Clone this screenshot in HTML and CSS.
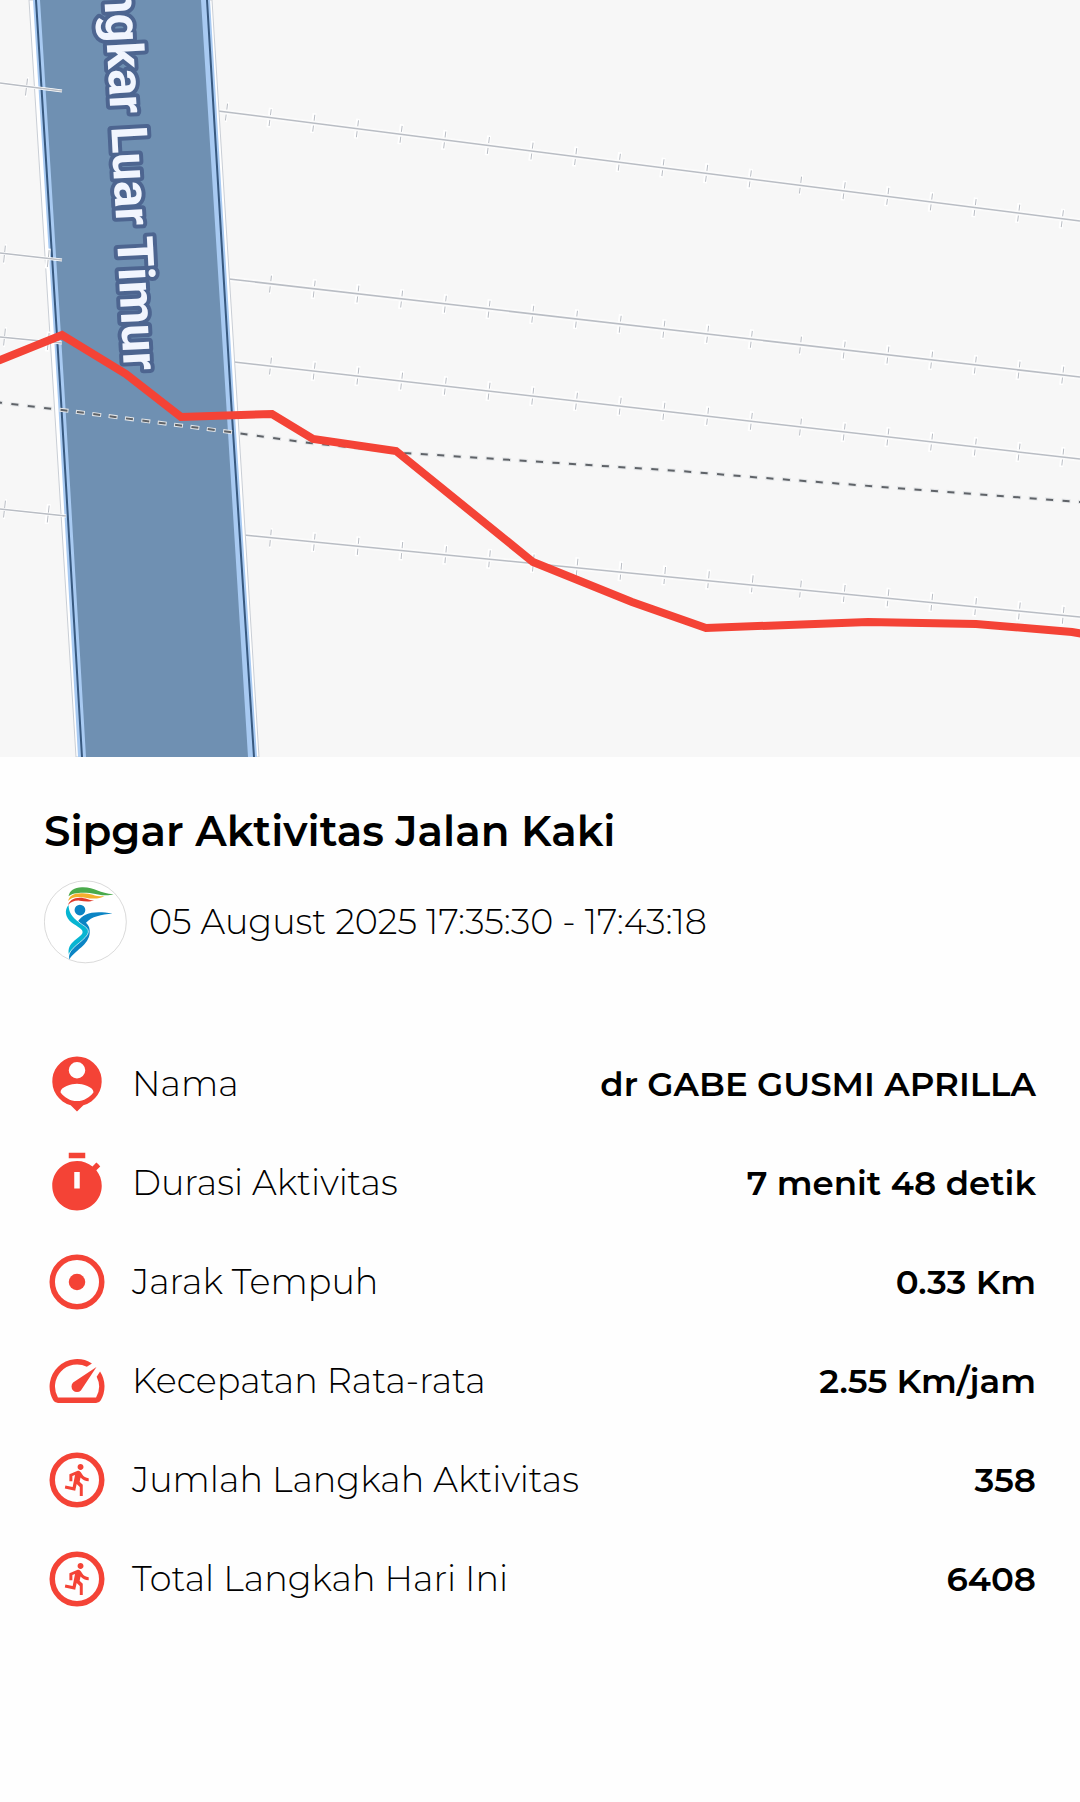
FILE: index.html
```html
<!DOCTYPE html>
<html lang="id">
<head>
    <meta charset="UTF-8">
    <meta name="viewport" content="width=device-width, initial-scale=1.0">
    <title>Sipgar Aktivitas Jalan Kaki</title>
    <link rel="stylesheet" href="styles.css">
</head>
<body>

<svg class="map" viewBox="0 0 1080 757" role="img" aria-label="Peta rute">
    <defs>
        <path id="rails" d="M218 111L1080 221M229 279L1080 377M234 362L680 413L1080 459M244 535L680 578L1080 617"/>
        <path id="ties" d="M226 112L775 182M800 185L1080 221M270 284L775 342M800 345L1080 377M270 366L775 424M800 427L1080 459M270 538L775 586M800 589L1080 617"/>
        <path id="rails-left" d="M0 83L62 91M0 253L62 260M0 337L62 343M0 509L66 516"/>
        <path id="ties-left" d="M26 87L60 91M4 254L62 260M4 337L62 343M4 509L66 516"/>
        <path id="footpath" d="M-5 402L11 404L62 410L230 432L310 443L405 453L680 471L752 477L1080 502"/>
    </defs>

    <!-- Railway east of the road -->
    <use href="#ties" class="tie-halo"/>
    <use href="#ties" class="tie"/>
    <use href="#rails" class="rail-halo"/>
    <use href="#rails" class="rail"/>

    <!-- Road -->
    <path class="road-outline" d="M29 0L54 400L76 757H259L237 400L212 0Z"/>
    <path class="road-edge" d="M33 0L58 400L78 757H257L234 400L210 0Z"/>
    <path class="road" d="M40 0L65 400L86 757H248L226 400L201 0Z"/>
    <path class="road-line" d="M36 0L61 400L82 757M207 0L231 400L254 757"/>

    <!-- Railway west of the road -->
    <use href="#ties-left" class="tie-halo"/>
    <use href="#ties-left" class="tie"/>
    <use href="#rails-left" class="rail-halo-thin"/>
    <use href="#rails-left" class="rail"/>

    <use href="#footpath" class="footpath-halo"/>
    <use href="#footpath" class="footpath"/>

    <text class="road-name" transform="translate(124 371) rotate(87)">ngkar Luar Timur</text>

    <path class="route" d="M-10 364L0 360L62 335L126 374L181 417L272 414L313 439L396 451L533 562L632 602L706 628L868 622L976 624L1072 632L1090 635"/>
</svg>

<main class="details">
    <h1>Sipgar Aktivitas Jalan Kaki</h1>
    <div class="meta">
        <svg class="logo" viewBox="24 29 247 249" aria-hidden="true">
            <circle cx="147" cy="153" r="122" fill="#fff" stroke="#c8c8c8" stroke-width="2"/>
            <path fill="#4aaa4c" d="M97 77C100 60 115 49 140 50C175 50 190 68 231 71C205 79 185 70 160 67C130 65 108 67 97 77Z"/>
            <path fill="#f4af2d" d="M96 91C98 78 110 68 135 68C165 67 175 79 204 77C185 87 165 84 148 81C120 77 105 80 96 91Z"/>
            <path fill="#e0392b" d="M96 103C98 90 112 81 130 81C150 81 158 90 173 89C158 95 145 92 130 90C115 89 103 94 96 103Z"/>
            <path fill="#0b84c4" d="M126 150C142 129 170 118 228 129C195 131 165 137 149 156C158 164 161 174 160 186C157 222 118 236 99 265C96 240 112 226 130 212C146 198 146 176 126 150Z"/>
            <path fill="#07b5d2" d="M97 103C84 118 87 140 106 155C122 167 144 175 138 188C124 207 92 215 98 250C108 224 152 205 156 184C157 171 144 166 128 154C106 138 98 125 97 103Z"/>
            <path fill="none" stroke="#fff" stroke-width="2" d="M98 250C108 224 152 205 156 184C157 171 144 166 128 154"/>
            <circle cx="131" cy="118" r="16" fill="#0b84c4"/>
        </svg>
        <p>05 August 2025 17:35:30 - 17:43:18</p>
    </div>

    <dl class="stats">
        <div class="row">
            <dt>
                <svg class="icon" viewBox="0 0 24 24" aria-hidden="true"><path fill-rule="evenodd" d="M12 2a9 9 0 0 0-2.3 17.7L12 22l2.3-2.3A9 9 0 0 0 12 2zm0 2a3 3 0 1 1 0 6 3 3 0 0 1 0-6zM6 15c0-2 4-3.100 6-3.100s6 1.100 6 3.100c-1.300 1.900-3.500 3.200-6 3.200S7.300 16.900 6 15z"/></svg>
                Nama
            </dt>
            <dd>dr GABE GUSMI APRILLA</dd>
        </div>
        <div class="row">
            <dt>
                <svg class="icon" viewBox="0 0 24 24" aria-hidden="true"><path fill-rule="evenodd" d="M15 1H9v2h6V1zm-4 13h2V8h-2v6zm8.030-6.610l1.420-1.420c-.43-.51-.9-.99-1.410-1.410l-1.420 1.420C16.070 4.740 14.120 4 12 4c-4.970 0-9 4.030-9 9s4.020 9 9 9 9-4.030 9-9c0-2.120-.74-4.070-1.970-5.610z"/></svg>
                Durasi Aktivitas
            </dt>
            <dd>7 menit 48 detik</dd>
        </div>
        <div class="row">
            <dt>
                <svg class="icon" viewBox="0 0 24 24" aria-hidden="true"><circle class="ring" cx="12" cy="12" r="9"/><circle cx="12" cy="12" r="3"/></svg>
                Jarak Tempuh
            </dt>
            <dd>0.33 Km</dd>
        </div>
        <div class="row">
            <dt>
                <svg class="icon" viewBox="0 0 24 24" aria-hidden="true"><path d="M20.380 8.570l-1.230 1.850a8 8 0 0 1-.22 7.580H5.070A8 8 0 0 1 15.580 6.850l1.850-1.230A10 10 0 0 0 3.350 19a2 2 0 0 0 1.720 1h13.850a2 2 0 0 0 1.740-1 10 10 0 0 0-.27-10.440zm-9.790 6.840a2 2 0 0 0 2.830 0l5.660-8.490-8.490 5.660a2 2 0 0 0 0 2.830z"/></svg>
                Kecepatan Rata-rata
            </dt>
            <dd>2.55 Km/jam</dd>
        </div>
        <div class="row">
            <dt>
                <svg class="icon" viewBox="0 0 24 24" aria-hidden="true"><circle class="ring" cx="12" cy="12" r="9"/><path id="runner" transform="translate(6 5.4) scale(.54)" d="M13.490 5.480c1.100 0 2-.9 2-2s-.9-2-2-2-2 .9-2 2 .9 2 2 2zm-3.600 13.900l1-4.400 2.100 2v6h2v-7.500l-2.100-2 .6-3c1.300 1.500 3.300 2.500 5.500 2.500v-2c-1.900 0-3.500-1-4.300-2.400l-1-1.600c-.4-.6-1-1-1.700-1-.3 0-.5.1-.8.1l-5.200 2.200v4.700h2v-3.400l1.800-.7-1.600 8.100-4.900-1-.4 2 7 1.400z"/></svg>
                Jumlah Langkah Aktivitas
            </dt>
            <dd>358</dd>
        </div>
        <div class="row">
            <dt>
                <svg class="icon" viewBox="0 0 24 24" aria-hidden="true"><circle class="ring" cx="12" cy="12" r="9"/><use href="#runner"/></svg>
                Total Langkah Hari Ini
            </dt>
            <dd>6408</dd>
        </div>
    </dl>
</main>

</body>
</html>
```
FILE: styles.css
```css
body {
    margin: 0;
    background-color: #fefefe;
    color: black;
    font-family: Montserrat, Inter, sans-serif;
    font-size: 35px;
    line-height: 44px;
}

/* Map */
.map {
    display: block;
    width: 100%;
    background-color: #f7f7f7;
}
.map path, .map use {
    fill: none;
}
.tie-halo {
    stroke: white;
    stroke-width: 20;
    stroke-dasharray: 4 40;
    stroke-dashoffset: 2;
}
.tie {
    stroke: #b9bdc4;
    stroke-width: 17;
    stroke-dasharray: 1 43;
}
.rail-halo {
    stroke: #fbfbfb;
    stroke-width: 5;
}
.rail-halo-thin {
    stroke: white;
    stroke-width: 3;
}
.rail {
    stroke: #b9bdc4;
    stroke-width: 1.5;
}
.map .road-outline {
    fill: white;
    stroke: #c9ced5;
    stroke-width: 1;
}
.map .road-edge {
    fill: #a8caf2;
}
.map .road {
    fill: #6f90b2;
}
.road-line {
    stroke: #38597f;
    stroke-width: 2;
}
.footpath-halo {
    stroke: #e4e6e8;
    stroke-width: 4;
    stroke-dasharray: 9 7.5;
    stroke-dashoffset: 1;
}
.footpath {
    stroke: #5f6368;
    stroke-width: 2;
    stroke-dasharray: 7 9.5;
}
.road-name {
    font-family: Roboto, sans-serif;
    font-size: 50px;
    font-weight: 700;
    text-anchor: end;
    fill: #f1f5fe;
    stroke: #4d6590;
    stroke-width: 8;
    stroke-linejoin: round;
    paint-order: stroke;
}
.route {
    stroke: #f44336;
    stroke-width: 8;
}

/* Activity details */
.details {
    padding: 48px 44px;
}
h1 {
    margin: 0;
    font-size: 42px;
    font-weight: 600;
    line-height: 52px;
}
.meta {
    display: flex;
    align-items: center;
    gap: 22px;
    margin-top: 23px;
    font-weight: 300;
}
.meta p {
    margin: 0;
}
.logo {
    width: 83px;
    height: 84px;
}
.stats {
    margin: 70px 0 0;
}
.row {
    display: flex;
    align-items: center;
    justify-content: space-between;
    min-height: 99px;
}
dt {
    display: flex;
    align-items: center;
    gap: 22px;
    font-weight: 300;
}
dd {
    margin: 0;
    font-size: 34px;
    font-weight: 600;
    text-align: right;
}
.icon {
    width: 66px;
    height: 66px;
    fill: #f44336;
}
.ring {
    fill: none;
    stroke: #f44336;
    stroke-width: 2;
}
```
